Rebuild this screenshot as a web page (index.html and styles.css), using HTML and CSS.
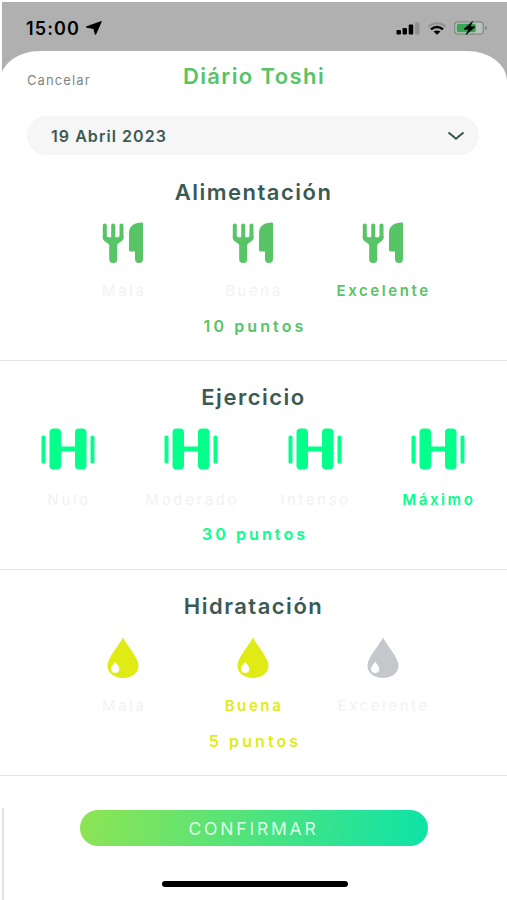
FILE: index.html
```html
<!DOCTYPE html>
<html lang="es">
<head>
<meta charset="UTF-8">
<meta name="viewport" content="width=device-width, initial-scale=1.0">
<title>Diário Toshi</title>
<link rel="stylesheet" href="styles.css">
</head>
<body>

<!-- shared icons -->
<svg class="defs" width="0" height="0">
  <symbol id="food" viewBox="0 0 42 42">
    <rect x="0.800" y="1.500" width="4" height="16" rx="2"/>
    <rect x="9.200" y="1.500" width="4" height="18" rx="2"/>
    <rect x="17.500" y="1.500" width="4" height="16" rx="2"/>
    <path d="M.8 14h4l1 1.300h10.700l1-1.300h4v2c0 3-4.300 4-6 6.500H6.800C5 20 .8 19 .8 16z"/>
    <rect x="7.200" y="16" width="8" height="25" rx="3.800"/>
    <path d="M41 1.500v35.500a4 4 0 0 1-8 0V29.500H28.500a1.500 1.500 0 0 1-1.500-1.500V11C27 4.500 32 .5 40 .5a1 1 0 0 1 1 1z"/>
  </symbol>
  <symbol id="gym" viewBox="0 0 54 42">
    <rect x="0.500" y="7.500" width="4" height="28" rx="1.600"/>
    <rect x="8.500" y="0.500" width="11.500" height="41" rx="4"/>
    <rect x="18" y="18.500" width="18" height="5"/>
    <rect x="34" y="0.500" width="11.500" height="41" rx="4"/>
    <rect x="49.500" y="7.500" width="4" height="28" rx="1.600"/>
  </symbol>
  <symbol id="drop" viewBox="0 0 32 42">
    <path d="M16 .5C19.500 8 31.500 20 31.500 28.800 31.500 36 25 41 16 41S.5 36 .5 28.800C.5 20 12.500 8 16 .5z"/>
    <path d="M8.200 24.500c1 2.500 4.100 4.500 4.100 7.500 0 2.500-1.800 4-4.100 4s-4.100-1.500-4.100-4c0-3 3.100-5 4.100-7.500z" fill="#fff"/>
  </symbol>
</svg>

<div class="phone">
  <div class="status">
    <div class="time">15:00
      <svg width="16" height="14" viewBox="0 0 16 14"><path d="M15 .8L9.500 13 8 7.300.8 6z" stroke="#000" stroke-width="1.400" stroke-linejoin="round"/></svg>
    </div>
    <div class="signals">
      <svg width="24" height="13" viewBox="0 0 24 13">
        <rect x="0.500" y="8" width="4.500" height="4.500" rx="1"/>
        <rect x="6.500" y="6" width="4.500" height="6.500" rx="1"/>
        <rect x="12.700" y="2.500" width="4.500" height="10" rx="1"/>
        <rect x="19" y="0.500" width="4.500" height="12" rx="1" fill="#929292"/>
      </svg>
      <svg width="20" height="13" viewBox="0 0 20 13" fill="none" stroke-width="2.200">
        <path d="M1.200 4.700C6 .2 14 .2 18.800 4.700" stroke="#929292"/>
        <path d="M4 7.400c3.500-3.200 8.500-3.200 12 0" stroke="#000" stroke-width="2.600"/>
        <path d="M6.500 9.600c2-1.600 5-1.600 7 0L10 12.800z" fill="#000"/>
      </svg>
      <svg width="34" height="14" viewBox="0 0 34 14">
        <rect x="0.700" y="0.800" width="28.500" height="12.400" rx="3.500" fill="#b8c4bb" stroke="#858585" stroke-width="1.200"/>
        <rect x="2.800" y="2.800" width="19" height="8.400" rx="1.800" fill="#34a853"/>
        <path d="M31.200 5v4c2-.7 2-3.300 0-4z" fill="#777"/>
        <path d="M18.500.5l-8.500 7.700h5L12 13.500l9-7.700h-5z" stroke="#000" stroke-width="0.800"/>
      </svg>
    </div>
  </div>

  <div class="sheet">
    <div class="head">
      <a class="cancel">Cancelar</a>
      <h1>Diário Toshi</h1>
    </div>

    <div class="date">
      <span>19 Abril 2023</span>
      <svg width="18" height="10" viewBox="0 0 18 10"><path d="M1.500 1.500L9 7.800l7.500-6.300" fill="none" stroke="#365850" stroke-width="2"/></svg>
    </div>

    <section class="food">
      <h2>Alimentación</h2>
      <div class="options">
        <div class="option"><svg width="42" height="42"><use href="#food"/></svg><span>Mala</span></div>
        <div class="option"><svg width="42" height="42"><use href="#food"/></svg><span>Buena</span></div>
        <div class="option on"><svg width="42" height="42"><use href="#food"/></svg><span>Excelente</span></div>
      </div>
      <p class="points">10 puntos</p>
    </section>

    <section class="gym">
      <h2>Ejercicio</h2>
      <div class="options">
        <div class="option"><svg width="54" height="42"><use href="#gym"/></svg><span>Nulo</span></div>
        <div class="option"><svg width="54" height="42"><use href="#gym"/></svg><span>Moderado</span></div>
        <div class="option"><svg width="54" height="42"><use href="#gym"/></svg><span>Intenso</span></div>
        <div class="option on"><svg width="54" height="42"><use href="#gym"/></svg><span>Máximo</span></div>
      </div>
      <p class="points">30 puntos</p>
    </section>

    <section class="water">
      <h2>Hidratación</h2>
      <div class="options">
        <div class="option"><svg width="32" height="42"><use href="#drop"/></svg><span>Mala</span></div>
        <div class="option on"><svg width="32" height="42"><use href="#drop"/></svg><span>Buena</span></div>
        <div class="option off"><svg width="32" height="42"><use href="#drop"/></svg><span>Excelente</span></div>
      </div>
      <p class="points">5 puntos</p>
    </section>

    <div class="footer">
      <button class="confirm">CONFIRMAR</button>
      <div class="home"></div>
    </div>
  </div>
</div>

</body>
</html>
```
FILE: styles.css
```css
*{box-sizing:border-box;}

body{
  margin:0;
  font-family:Inter,Roboto,sans-serif;
  background:white;
  color:#3c5a54;
  overflow:hidden;
}

.defs{position:absolute;}

h1,h2,p{margin:0;}

.phone{
  width:507px;
  height:900px;
  padding:2px 0 0 2px;
  background:linear-gradient(#b0b0b0,#b0b0b0) 2px 2px/505px 78px no-repeat white;
}

/* STATUS BAR */
.status{
  height:49px;
  padding:3px 19px 0 24px;
  display:flex;
  justify-content:space-between;
  align-items:center;
}
.time{
  display:flex;
  align-items:center;
  gap:6px;
  color:black;
  font-size:18px;
  font-weight:600;
  letter-spacing:1.1px;
}
.signals{
  display:flex;
  align-items:center;
  gap:7px;
}

.sheet{
  height:849px;
  margin-left:-2px;
  background:white;
  border-radius:40px 40px 0 0/30px 30px 0 0;
}

/* HEADER */
.head{
  height:65px;
  padding:0 27px;
  display:grid;
  grid-template-columns:1fr auto 1fr;
  align-items:start;
}
.cancel{
  padding-top:20px;
  font-size:13px;
  line-height:18px;
  letter-spacing:1.1px;
  color:#7b8784;
}
h1{
  padding:10px 0 0 1px;
  font-size:22px;
  line-height:30px;
  font-weight:600;
  letter-spacing:1.4px;
  color:#57c466;
}

.date{
  height:39px;
  margin:0 28px 0 27px;
  padding:0 14px 0 24px;
  display:flex;
  justify-content:space-between;
  align-items:center;
  border-radius:20px;
  background:#f6f6f6;
  font-size:16px;
  font-weight:600;
  letter-spacing:1.05px;
}

/* SECTIONS */
section{
  height:206px;
  padding-top:22px;
  border-bottom:1px solid #e6e6e6;
  text-align:center;
}
.gym{height:209px;}
.gym,.water{padding-top:21px;}

h2{
  font-size:22px;
  line-height:30px;
  font-weight:600;
  letter-spacing:1.5px;
}
.options{
  width:390px;
  margin:15px auto 0;
  padding-right:1px;
  display:grid;
  grid-template-columns:repeat(3,1fr);
}
.gym .options{
  width:494px;
  margin-top:16px;
  grid-template-columns:repeat(4,1fr);
}
.water .options{margin-top:16px;}
.option{
  display:flex;
  flex-direction:column;
  align-items:center;
  gap:17px;
  color:#f2f2f2;
  font-size:15px;
  line-height:20px;
  letter-spacing:2.6px;
}
.gym .option{gap:20px;}
.option svg{fill:currentColor;}
.option span{padding-left:2px;}
.option.on{font-weight:600;}

.food svg,.food .on,.food .points{color:#57c466;}
.gym svg,.gym .on,.gym .points{color:#05ff8b;}
.water svg,.water .on,.water .points{color:#e0eb15;}
.water .off svg{color:#c4c8cc;}

.points{
  margin-top:15px;
  padding-left:3px;
  font-size:16px;
  line-height:20px;
  font-weight:600;
  letter-spacing:3.1px;
}
.gym .points{margin-top:14px;}

/* FOOTER */
.footer{
  height:92px;
  margin:32px 2px 0;
  padding:2px 2px 0 0;
  display:flex;
  flex-direction:column;
  align-items:center;
  border-left:2px solid #e2e2e2;
}
.confirm{
  width:348px;
  height:36px;
  border:none;
  border-radius:20px;
  background:linear-gradient(100deg,#8fe453,#0de3a8);
  color:#dcffe8;
  font-family:inherit;
  font-size:17.5px;
  letter-spacing:2.8px;
}
.home{
  width:186px;
  height:6px;
  margin:35px 0 0 2px;
  border-radius:3px;
  background:black;
}
```
